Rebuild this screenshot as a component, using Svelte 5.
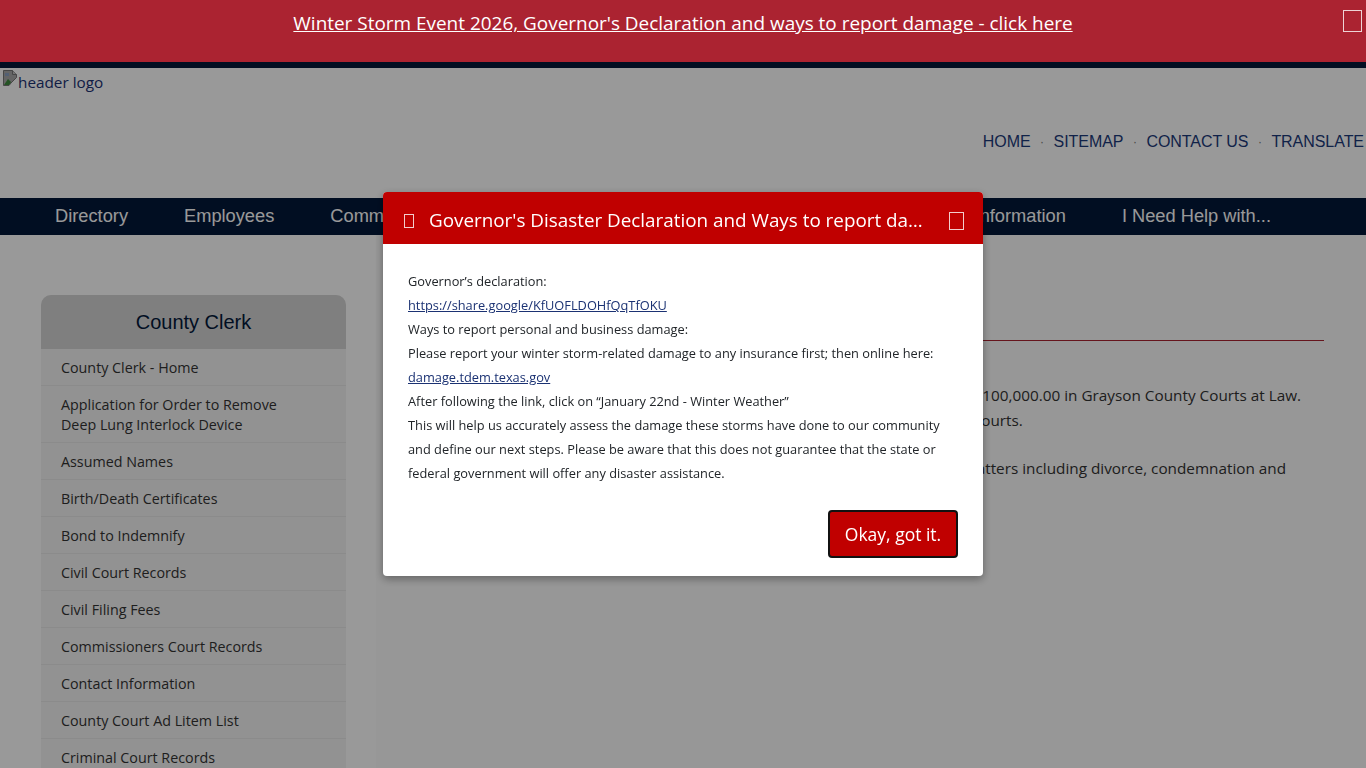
<script>
  const sideLinks = [
    ['County Clerk - Home'],
    ['Application for Order to Remove', 'Deep Lung Interlock Device'],
    ['Assumed Names'],
    ['Birth/Death Certificates'],
    ['Bond to Indemnify'],
    ['Civil Court Records'],
    ['Civil Filing Fees'],
    ['Commissioners Court Records'],
    ['Contact Information'],
    ['County Court Ad Litem List'],
    ['Criminal Court Records']
  ];
  const navLinks = ['Directory', 'Employees', 'Commissioners', 'Offices', 'Elected Officials', 'Maps', 'County Information', 'I Need Help with...'];
  const topLinks = ['HOME', 'SITEMAP', 'CONTACT US', 'TRANSLATE'];
</script>

<div class="page">
  <div class="banner">
    <a href="#top" class="banner-link">Winter Storm Event 2026, Governor's Declaration and ways to report damage - click here</a>
    <span class="tofu banner-close"></span>
  </div>

  <header class="head">
    <div class="logo">
      <svg class="broken" width="16" height="16" viewBox="0 0 16 16">
        <path d="M1.5 .5h9l4 4v3L9 13l-2 2.5H1.5z" fill="#a8a8a8" stroke="#777"/>
        <path d="M10.5 .5v4h4" fill="#c4c4c4" stroke="#777"/>
        <path d="M2 15l4-6 3 3-2 3z" fill="#3c8a3c"/>
        <path d="M3 3h4v3H3z" fill="#8aa0c0"/>
      </svg><span>header logo</span>
    </div>
    <nav class="top-links">
      {#each topLinks as t, i}
        {#if i > 0}<span class="dot">·</span>{/if}
        <a href="#top">{t}</a>
      {/each}
    </nav>
  </header>

  <nav class="mainnav">
    {#each navLinks as n}
      <a href="#top">{n}</a>
    {/each}
  </nav>

  <div class="content">
    <aside class="side-wrap">
      <div class="side">
        <h2>County Clerk</h2>
        <ul>
          {#each sideLinks as l}
            <li>{#each l as line, i}{#if i > 0}<br />{/if}{line}{/each}</li>
          {/each}
        </ul>
      </div>
    </aside>
    <main class="main">
      <h1>Civil Courts</h1>
      <p>The County Clerk files and keeps the official records for all civil court matters up to $100,000.00 in Grayson County Courts at Law.<br />They also maintain the official records for all civil actions in all the Grayson County Courts.</p>
      <p>The County Courts at Law in Grayson County hear all family law or other relevant matters including divorce, condemnation and<br />related civil cases.</p>
    </main>
  </div>
</div>

<div class="overlay"></div>

<div class="modal" role="dialog">
  <div class="modal-head">
    <span class="tofu m-icon"></span>
    <h3>Governor's Disaster Declaration and Ways to report damage</h3>
    <span class="tofu m-close"></span>
  </div>
  <div class="modal-body">
    <div>Governor’s declaration:</div>
    <div><a href="#top">https://share.google/KfUOFLDOHfQqTfOKU</a></div>
    <div>Ways to report personal and business damage:</div>
    <div>Please report your winter storm-related damage to any insurance first; then online here:</div>
    <div><a href="#top">damage.tdem.texas.gov</a></div>
    <div>After following the link, click on “January 22nd - Winter Weather”</div>
    <div>This will help us accurately assess the damage these storms have done to our community</div>
    <div>and define our next steps. Please be aware that this does not guarantee that the state or</div>
    <div>federal government will offer any disaster assistance.</div>
  </div>
  <div class="modal-foot">
    <button type="button">Okay, got it.</button>
  </div>
</div>

<style>
  :global(body) {
    margin: 0;
    background: #fff;
    overflow: hidden;
    font-family: "Open Sans", "Liberation Sans", sans-serif;
  }
  .page {
    height: 768px;
    overflow: hidden;
    background: #fff;
    color: #333;
  }
  .banner {
    position: relative;
    z-index: 20;
    height: 53px;
    background: #ab2331;
    border-bottom: 6px solid #020e22;
    text-align: center;
    padding-top: 9px;
  }
  .banner-link {
    color: #fff;
    font-size: 18.95px;
    line-height: 28px;
  }
  .tofu {
    display: block;
    box-sizing: border-box;
    border: 1px solid rgba(255, 255, 255, 0.8);
  }
  .banner-close {
    position: absolute;
    left: 1343px;
    top: 10px;
    width: 19px;
    height: 22px;
  }
  .head {
    height: 130px;
    position: relative;
    background: #fff;
  }
  .logo {
    display: flex;
    align-items: flex-start;
    padding: 2px 0 0 2px;
    color: #1b3273;
    font-size: 15.3px;
    line-height: 24px;
  }
  .broken { flex: none; }
  .top-links {
    display: flex;
    justify-content: flex-end;
    align-items: center;
    gap: 9.5px;
    margin-top: 38px;
    padding-right: 2px;
    font-family: "Liberation Sans", sans-serif;
    font-size: 16px;
    letter-spacing: -0.05px;
    line-height: 20px;
  }
  .top-links a {
    color: #1c3a7a;
    text-decoration: none;
  }
  .dot { color: #777; font-size: 12px; }
  .mainnav {
    height: 37px;
    background: #03183a;
    display: flex;
    align-items: center;
    gap: 56px;
    padding: 0 0 2px 55px;
    font-family: "Liberation Sans", sans-serif;
    font-size: 18.25px;
    box-sizing: border-box;
  }
  .mainnav a {
    color: #fff;
    text-decoration: none;
    white-space: nowrap;
  }
  .content {
    display: flex;
    background: #fff;
  }
  .side-wrap {
    width: 376px;
    flex: none;
    box-sizing: border-box;
    padding: 60px 30px 0 41px;
  }
  .side {
    background: #f4f4f4;
    border-radius: 10px 10px 0 0;
  }
  .side h2 {
    margin: 0;
    height: 54px;
    background: #d4d4d4;
    border-radius: 10px 10px 0 0;
    color: #03183a;
    font: 400 20px/54px "Liberation Sans", sans-serif;
    text-align: center;
  }
  .side ul {
    list-style: none;
    margin: 0;
    padding: 0;
  }
  .side li {
    padding: 9px 20px 7px;
    border-bottom: 1px solid #e8e8e8;
    font-size: 14.3px;
    line-height: 20px;
    color: #333;
  }
  .main {
    flex: 1;
    padding: 0 42px 0 8px;
    background: #fcfcfc;
    min-height: 533px;
  }
  .main h1 {
    margin: 0 0 42px;
    padding-top: 60px;
    height: 45px;
    box-sizing: content-box;
    border-bottom: 1px solid #ab2331;
    font-size: 22px;
    font-weight: 400;
  }
  .main p {
    margin: 23px 0 0;
    font-size: 15.3px;
    line-height: 25px;
    white-space: nowrap;
    color: #333;
  }
  .overlay {
    position: fixed;
    inset: 0;
    z-index: 10;
    background: rgba(0, 0, 0, 0.4);
  }
  .modal {
    position: fixed;
    z-index: 30;
    left: 383px;
    top: 192px;
    width: 600px;
    height: 384px;
    background: #fff;
    border-radius: 4px;
    box-shadow: 0 3px 8px rgba(0, 0, 0, 0.35);
    display: flex;
    flex-direction: column;
    overflow: hidden;
  }
  .modal-head {
    height: 52px;
    flex: none;
    background: #c00000;
    color: #fff;
    display: flex;
    align-items: center;
    padding: 0 19px 0 21px;
  }
  .m-icon {
    width: 10px;
    height: 14px;
    margin: 6px 15px 0 0;
    flex: none;
  }
  .m-close {
    width: 15px;
    height: 18px;
    margin: 6px 0 0 26px;
    flex: none;
  }
  .modal-head h3 {
    margin: 0;
    padding-top: 4px;
    flex: 1;
    min-width: 0;
    font-size: 18.85px;
    font-weight: 400;
    white-space: nowrap;
    overflow: hidden;
    text-overflow: ellipsis;
  }
  .modal-body {
    padding: 25px 25px 0;
    font-size: 12.8px;
    line-height: 24px;
    color: #212529;
    white-space: nowrap;
  }
  .modal-body a { color: #1b3273; }
  .modal-foot {
    display: flex;
    justify-content: flex-end;
    padding: 25px 25px 0;
  }
  .modal-foot button {
    width: 130px;
    height: 48px;
    box-sizing: border-box;
    background: #c00000;
    color: #fff;
    border: 2px solid #111;
    border-radius: 4px;
    font-family: inherit;
    font-size: 17.5px;
    padding: 0;
  }
</style>
